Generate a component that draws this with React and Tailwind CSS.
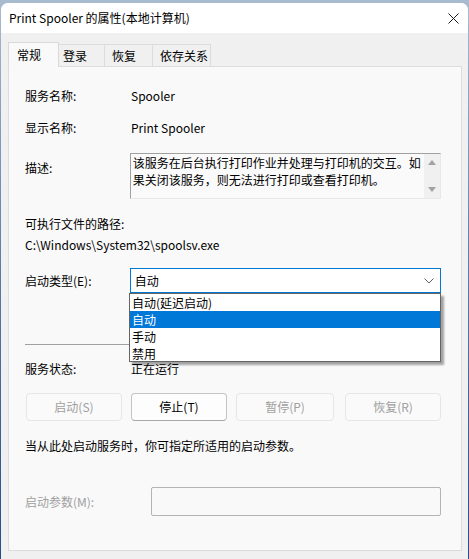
import React from "react";

const font = { fontFamily: '"Segoe UI", "Noto Sans CJK SC", "Noto Sans", sans-serif' };

function Btn({ children, enabled, w }) {
  return (
    <div
      className={
        "h-[28px] flex items-center justify-center rounded-[4px] border text-[12px] " +
        (enabled
          ? "bg-[#fdfdfd] border-[#c4c4c4] border-b-[#a8a8a8] text-black"
          : "bg-[#fafafa] border-[#e6e6e6] text-[#a0a0a0]")
      }
      style={{ width: w }}
    >
      {children}
    </div>
  );
}

export default function App() {
  return (
    <div className="w-[469px] h-[559px] bg-gradient-to-b from-[#a9bbcf] via-[#5a78a8] to-[#2a4a8c] pt-[3px] px-px overflow-hidden" style={font}>
      <div className="h-[556px] rounded-t-[7px] bg-[#f0f0f0] flex flex-col overflow-hidden">
        {/* Title bar */}
        <div className="h-[30px] bg-white flex items-center justify-between pl-[8px] pr-[8px] shrink-0">
          <span className="text-[12px] text-black leading-none">Print Spooler 的属性(本地计算机)</span>
          <svg width="11" height="11" viewBox="0 0 11 11" className="mr-[1px]">
            <path d="M0.5 0.5 L10.5 10.5 M10.5 0.5 L0.5 10.5" stroke="#1a1a1a" strokeWidth="1" fill="none" />
          </svg>
        </div>

        {/* Tabs */}
        <div className="pl-[7px] pt-[9px] flex items-end h-[33px] shrink-0">
          <div className="relative z-10 w-[51px] h-[25px] bg-[#f9f9f9] border border-b-0 border-[#d9d9d9] flex items-start pl-[8px] pt-[3px] text-[12px] text-black -mb-px">
            常规
          </div>
          <div className="w-[46px] h-[22px] border-t border-r border-[#dcdcdc] bg-[#f0f0f0] flex items-center pl-[4px] text-[12px] text-black">登录</div>
          <div className="w-[48px] h-[22px] border-t border-r border-[#dcdcdc] bg-[#f0f0f0] flex items-center pl-[7px] text-[12px] text-black">恢复</div>
          <div className="w-[58px] h-[22px] border-t border-r border-[#dcdcdc] bg-[#f0f0f0] flex items-center pl-[7px] text-[12px] text-black">依存关系</div>
        </div>

        {/* Panel */}
        <div className="relative ml-[7px] w-[454px] h-[485px] bg-[#f9f9f9] border border-[#dcdcdc] text-[12px] text-black leading-[16px]">
          <div className="pl-[16px] pr-[20px] pt-[21px] flex flex-col">
            <div className="flex">
              <span className="w-[106px]">服务名称:</span>
              <span>Spooler</span>
            </div>
            <div className="flex mt-[16px]">
              <span className="w-[106px]">显示名称:</span>
              <span>Print Spooler</span>
            </div>
            <div className="flex mt-[17px] items-start">
              <span className="w-[105px] mt-[7px]">描述:</span>
              <div className="w-[312px] h-[46px] border-t border-l border-[#a0a0a0] border-r border-b border-r-[#e8e8e8] border-b-[#e8e8e8] bg-[#fafafa] flex">
                <div className="flex-1 pl-[2px] pt-0 leading-[17px] text-[12px]">
                  该服务在后台执行打印作业并处理与打印机的交互。如果关闭该服务，则无法进行打印或查看打印机。
                </div>
                <div className="w-[16px] bg-[#f0f0f0] flex flex-col items-center justify-between py-[6px]">
                  <svg width="8" height="5" viewBox="0 0 8 5"><path d="M4 0 L8 5 L0 5 Z" fill="#a3a3a3" /></svg>
                  <svg width="8" height="5" viewBox="0 0 8 5"><path d="M0 0 L8 0 L4 5 Z" fill="#a3a3a3" /></svg>
                </div>
              </div>
            </div>
            <div className="mt-[17px]">可执行文件的路径:</div>
            <div className="mt-[5px]">C:\Windows\System32\spoolsv.exe</div>
            <div className="flex mt-[15px] items-center">
              <span className="w-[105px]">启动类型(E):</span>
              <div className="w-[312px] h-[25px] border border-[#0078d4] bg-white flex items-center justify-between pl-[4px] pr-[6px]">
                <span>自动</span>
                <svg width="10" height="6" viewBox="0 0 10 6"><path d="M0.5 0.5 L5 5 L9.5 0.5" stroke="#606060" strokeWidth="1" fill="none" /></svg>
              </div>
            </div>
            <div className="mt-[51px] h-px bg-[#a0a0a0] w-[110px]"></div>
            <div className="flex mt-[16px]">
              <span className="w-[106px]">服务状态:</span>
              <span>正在运行</span>
            </div>
            <div className="flex mt-[16px] pl-[1px]">
              <Btn w="96px">启动(S)</Btn>
              <div className="w-[9px]" />
              <Btn w="96px" enabled>停止(T)</Btn>
              <div className="w-[9px]" />
              <Btn w="98px">暂停(P)</Btn>
              <div className="w-[11px]" />
              <Btn w="96px">恢复(R)</Btn>
            </div>
            <div className="mt-[17px]">当从此处启动服务时，你可指定所适用的启动参数。</div>
            <div className="flex mt-[33px] items-center">
              <span className="w-[126px] text-[#a0a0a0]">启动参数(M):</span>
              <div className="w-[291px] h-[29px] border border-[#b4b4b4] rounded-[2px] bg-[#f9f9f9]"></div>
            </div>
          </div>

          {/* Dropdown list overlay */}
          <div className="absolute left-[120px] top-[226px] w-[312px] h-[69px] bg-white border border-[#646464] shadow-[3px_3px_2px_rgba(0,0,0,0.35)] flex flex-col leading-[17px]">
            <div className="h-[17px] pl-[2px]">自动(延迟启动)</div>
            <div className="h-[17px] pl-[2px] bg-[#0078d7] text-white">自动</div>
            <div className="h-[17px] pl-[2px]">手动</div>
            <div className="h-[17px] pl-[2px]">禁用</div>
          </div>
        </div>
      </div>
    </div>
  );
}
